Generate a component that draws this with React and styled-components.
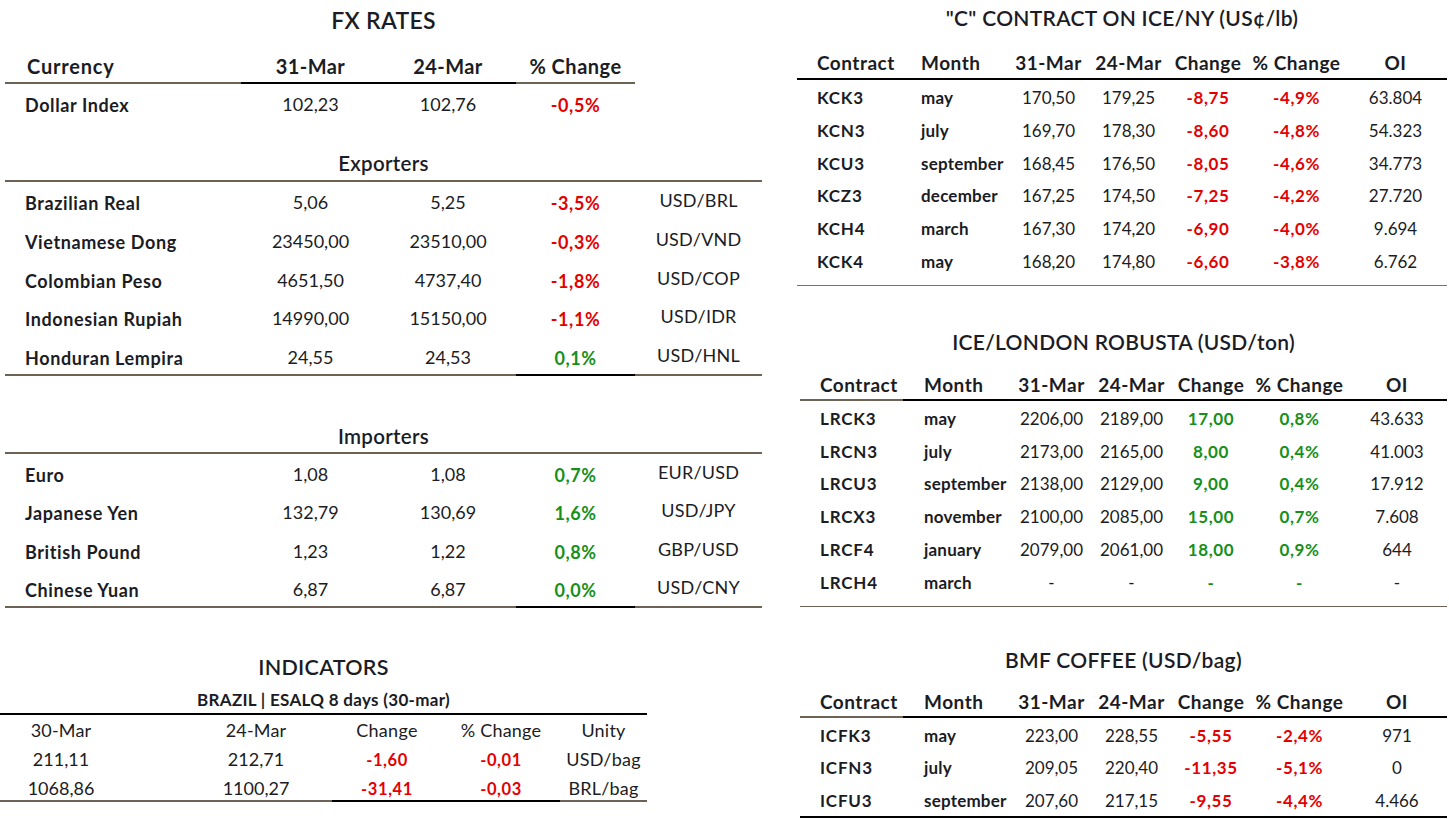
import React from "react";
import styled, { createGlobalStyle } from "styled-components";

const INK = "#1b1c24";
const RED = "#e40000";
const GREEN = "#16901a";
const BROWN = "#6e6254";
const BLACK = "#000";

const GlobalStyle = createGlobalStyle`
  html, body { margin: 0; padding: 0; background: #fff; }
  body { font-family: Lato, "Noto Sans", "Liberation Sans", sans-serif; color: ${INK}; }
  * { box-sizing: border-box; }
`;

const Page = styled.div`
  display: flex;
  width: 1449px;
  height: 819px;
  overflow: hidden;
  background: #fff;
`;

const LeftPanel = styled.div`
  width: 797px;
  display: flex;
  flex-direction: column;
`;

const RightPanel = styled.div`
  width: 652px;
  display: flex;
  flex-direction: column;
`;

const Block = styled.div`
  width: ${(p) => p.$w}px;
  margin-left: ${(p) => p.$ml || 0}px;
  margin-top: ${(p) => p.$mt || 0}px;
`;

const Title = styled.div`
  text-align: center;
  font-size: ${(p) => p.$size || 21}px;
  font-weight: ${(p) => p.$weight || 600};
  letter-spacing: ${(p) => p.$ls || 0.3}px;
  line-height: ${(p) => p.$lh || 30}px;
  height: ${(p) => p.$h || p.$lh || 30}px;
  padding-top: ${(p) => p.$pt || 0}px;
  border-bottom: ${(p) => (p.$line ? `2px solid ${p.$line}` : "none")};
  white-space: nowrap;
`;

const Row = styled.div`
  display: grid;
  grid-template-columns: ${(p) => p.$cols};
  height: ${(p) => p.$h}px;
`;

const Cell = styled.div`
  padding-top: ${(p) => p.$pt}px;
  padding-left: ${(p) => p.$pl || 0}px;
  text-align: ${(p) => p.$align || "center"};
  font-size: ${(p) => p.$size}px;
  line-height: 22px;
  font-weight: ${(p) => p.$weight || 400};
  letter-spacing: ${(p) => (p.$ls !== undefined ? p.$ls : (p.$weight || 400) >= 600 ? 0.6 : 0)}px;
  color: ${(p) => p.$color || INK};
  border-bottom: ${(p) => (p.$line ? `${p.$lw || 2}px solid ${p.$line}` : "none")};
  white-space: nowrap;
`;

const Table = styled.div`
  padding-bottom: ${(p) => p.$tail || 0}px;
  border-bottom: ${(p) => (p.$end ? `${p.$endW}px solid ${p.$end}` : "none")};
`;

/* ---------------- FX RATES ---------------- */

const FX_COLS = "236px 139px 136px 119px 127px";

const exporters = [
  ["Brazilian Real", "5,06", "5,25", "-3,5%", "USD/BRL"],
  ["Vietnamese Dong", "23450,00", "23510,00", "-0,3%", "USD/VND"],
  ["Colombian Peso", "4651,50", "4737,40", "-1,8%", "USD/COP"],
  ["Indonesian Rupiah", "14990,00", "15150,00", "-1,1%", "USD/IDR"],
  ["Honduran Lempira", "24,55", "24,53", "0,1%", "USD/HNL"],
];

const importers = [
  ["Euro", "1,08", "1,08", "0,7%", "EUR/USD"],
  ["Japanese Yen", "132,79", "130,69", "1,6%", "USD/JPY"],
  ["British Pound", "1,23", "1,22", "0,8%", "GBP/USD"],
  ["Chinese Yuan", "6,87", "6,87", "0,0%", "USD/CNY"],
];

const tone = (v) => (v.trim().startsWith("-") ? RED : GREEN);

function FxRow({ r, last, h }) {
  const lines = last ? [BROWN, BROWN, BROWN, BLACK, BROWN] : [];
  return (
    <Row $cols={FX_COLS} $h={h}>
      <Cell $align="left" $pl={20} $pt={10} $size={18} $weight={700} $line={lines[0]}>{r[0]}</Cell>
      <Cell $pt={9} $size={18} $line={lines[1]}>{r[1]}</Cell>
      <Cell $pt={9} $size={18} $line={lines[2]}>{r[2]}</Cell>
      <Cell $pt={10} $size={18} $weight={700} $color={tone(r[3])} $line={lines[3]}>{r[3]}</Cell>
      <Cell $pt={7} $size={18} $ls={0.2} $line={lines[4]}>{r[4]}</Cell>
    </Row>
  );
}

function FxRates() {
  return (
    <Block $w={757} $ml={5}>
      <Title $size={23} $lh={40}>FX RATES</Title>
      <Row $cols={FX_COLS} $h={44}>
        <Cell $align="left" $pl={22} $pt={15} $size={20} $weight={700} $ls={0.8} $line={BROWN}>Currency</Cell>
        <Cell $pt={15} $size={20} $weight={700} $ls={0.4} $line={BLACK}>31-Mar</Cell>
        <Cell $pt={15} $size={20} $weight={700} $ls={0.4} $line={BLACK}>24-Mar</Cell>
        <Cell $pt={15} $size={20} $weight={700} $ls={0.5} $line={BROWN}>% Change</Cell>
        <Cell $pt={15} $size={20} />
      </Row>
      <Row $cols={FX_COLS} $h={39}>
        <Cell $align="left" $pl={20} $pt={10} $size={18} $weight={700}>Dollar Index</Cell>
        <Cell $pt={9} $size={18}>102,23</Cell>
        <Cell $pt={9} $size={18}>102,76</Cell>
        <Cell $pt={10} $size={18} $weight={700} $color={RED}>-0,5%</Cell>
        <Cell $pt={9} $size={18} />
      </Row>

      <Title $size={20.5} $lh={24} $h={59} $pt={28} $line={BROWN}>Exporters</Title>
      <Table>
        {exporters.map((r, i) => (
          <FxRow key={r[0]} r={r} h={38.8} last={i === exporters.length - 1} />
        ))}
      </Table>

      <Title $size={20.5} $lh={24} $h={78} $pt={48} $line={BROWN}>Importers</Title>
      <Table>
        {importers.map((r, i) => (
          <FxRow key={r[0]} r={r} h={38.5} last={i === importers.length - 1} />
        ))}
      </Table>
    </Block>
  );
}

/* ---------------- INDICATORS ---------------- */

const IND_COLS = "122px 210px 110px 118px 87px";

const indicators = [
  ["211,11", "212,71", "-1,60", "-0,01", "USD/bag"],
  ["1068,86", "1100,27", "-31,41", "-0,03", "BRL/bag"],
];

function Indicators() {
  return (
    <Block $w={647} $mt={45}>
      <Title $size={21.5} $lh={28}>INDICATORS</Title>
      <Title $size={17} $weight={700} $lh={20} $h={34} $pt={9} $line={BLACK}>
        BRAZIL | ESALQ 8 days (30-mar)
      </Title>
      <Row $cols={IND_COLS} $h={29}>
        <Cell $pt={4} $size={18} $ls={0.2}>30-Mar</Cell>
        <Cell $pt={4} $pl={58} $size={18} $ls={0.2}>24-Mar</Cell>
        <Cell $pt={4} $size={18} $ls={0.3}>Change</Cell>
        <Cell $pt={4} $size={18} $ls={0.2}>% Change</Cell>
        <Cell $pt={4} $size={18} $ls={0.2}>Unity</Cell>
      </Row>
      {indicators.map((r, i) => {
        const last = i === indicators.length - 1;
        const l = last ? [BROWN, BROWN, BLACK, BLACK, BROWN] : [];
        return (
          <Row key={r[0]} $cols={IND_COLS} $h={29}>
            <Cell $pt={4} $size={18} $ls={0} $line={l[0]}>{r[0]}</Cell>
            <Cell $pt={4} $pl={58} $size={18} $ls={0} $line={l[1]}>{r[1]}</Cell>
            <Cell $pt={5} $size={16.5} $weight={700} $color={RED} $line={l[2]}>{r[2]}</Cell>
            <Cell $pt={5} $size={16.5} $weight={700} $color={RED} $line={l[3]}>{r[3]}</Cell>
            <Cell $pt={4} $size={18} $ls={0.2} $line={l[4]}>{r[4]}</Cell>
          </Row>
        );
      })}
    </Block>
  );
}

/* ---------------- FUTURES ---------------- */

const FUT_COLS = "103px 107px 83px 77px 82px 95px 1fr";

const cContract = [
  ["KCK3", "may", "170,50", "179,25", "-8,75", "-4,9%", "63.804"],
  ["KCN3", "july", "169,70", "178,30", "-8,60", "-4,8%", "54.323"],
  ["KCU3", "september", "168,45", "176,50", "-8,05", "-4,6%", "34.773"],
  ["KCZ3", "december", "167,25", "174,50", "-7,25", "-4,2%", "27.720"],
  ["KCH4", "march", "167,30", "174,20", "-6,90", "-4,0%", "9.694"],
  ["KCK4", "may", "168,20", "174,80", "-6,60", "-3,8%", "6.762"],
];

const robusta = [
  ["LRCK3", "may", "2206,00", "2189,00", "17,00", "0,8%", "43.633"],
  ["LRCN3", "july", "2173,00", "2165,00", "8,00", "0,4%", "41.003"],
  ["LRCU3", "september", "2138,00", "2129,00", "9,00", "0,4%", "17.912"],
  ["LRCX3", "november", "2100,00", "2085,00", "15,00", "0,7%", "7.608"],
  ["LRCF4", "january", "2079,00", "2061,00", "18,00", "0,9%", "644"],
  ["LRCH4", "march", "-", "-", "-", "-", "-"],
];

const bmf = [
  ["ICFK3", "may", "223,00", "228,55", "-5,55", "-2,4%", "971"],
  ["ICFN3", "july", "209,05", "220,40", "-11,35", "-5,1%", "0"],
  ["ICFU3", "september", "207,60", "217,15", "-9,55", "-4,4%", "4.466"],
];

const futTone = (v, up) => (v.startsWith("-") && v.length > 1 ? RED : up ? GREEN : RED);

function FuturesTable({ title, rows, w, ml, mt, firstLine, up, tail, end, endW, titleH, headH, headPt }) {
  const heads = ["Contract", "Month", "31-Mar", "24-Mar", "Change", "% Change", "OI"];
  return (
    <Block $w={w} $ml={ml} $mt={mt}>
      <Title $size={21} $lh={30} $h={titleH}>{title}</Title>
      <Row $cols={FUT_COLS} $h={headH}>
        {heads.map((hd, i) => (
          <Cell
            key={hd}
            $align={i < 2 ? "left" : "center"}
            $pl={i < 2 ? (i === 0 ? 20 : 21) : 0}
            $pt={headPt}
            $size={19}
            $weight={700}
            $ls={0.5}
            $line={i === 0 ? firstLine : BLACK}
          >
            {hd}
          </Cell>
        ))}
      </Row>
      <Table $tail={tail} $end={end} $endW={endW}>
        {rows.map((r) => (
          <Row key={r[0]} $cols={FUT_COLS} $h={32.8}>
            <Cell $align="left" $pl={20} $pt={7} $size={17} $weight={700} $ls={0.8}>{r[0]}</Cell>
            <Cell $align="left" $pl={21} $pt={7} $size={17} $weight={700} $ls={0.2}>{r[1]}</Cell>
            <Cell $pt={7} $size={17}>{r[2]}</Cell>
            <Cell $pt={7} $size={17}>{r[3]}</Cell>
            <Cell $pt={7} $size={17} $weight={700} $color={futTone(r[4], up)}>{r[4]}</Cell>
            <Cell $pt={7} $size={17} $weight={700} $color={futTone(r[5], up)}>{r[5]}</Cell>
            <Cell $pt={7} $size={17}>{r[6]}</Cell>
          </Row>
        ))}
      </Table>
    </Block>
  );
}

export default function App() {
  return (
    <>
      <GlobalStyle />
      <Page>
        <LeftPanel>
          <FxRates />
          <Indicators />
        </LeftPanel>
        <RightPanel>
          <FuturesTable
            title={'"C" CONTRACT ON ICE/NY (US¢/lb)'}
            rows={cContract}
            w={650}
            ml={0}
            mt={3}
            titleH={33}
            headH={44}
            headPt={16}
            firstLine={BLACK}
            tail={8}
            end="#7a736c"
            endW={1.5}
          />
          <FuturesTable
            title="ICE/LONDON ROBUSTA (USD/ton)"
            rows={robusta}
            w={647}
            ml={3}
            mt={41}
            titleH={30}
            headH={44}
            headPt={17}
            firstLine={BROWN}
            up
            tail={8}
            end={BROWN}
            endW={1.5}
          />
          <FuturesTable
            title="BMF COFFEE (USD/bag)"
            rows={bmf}
            w={647}
            ml={3}
            mt={38}
            titleH={30}
            headH={43}
            headPt={16}
            firstLine={BROWN}
            tail={0}
            end={BLACK}
            endW={2}
          />
        </RightPanel>
      </Page>
    </>
  );
}
